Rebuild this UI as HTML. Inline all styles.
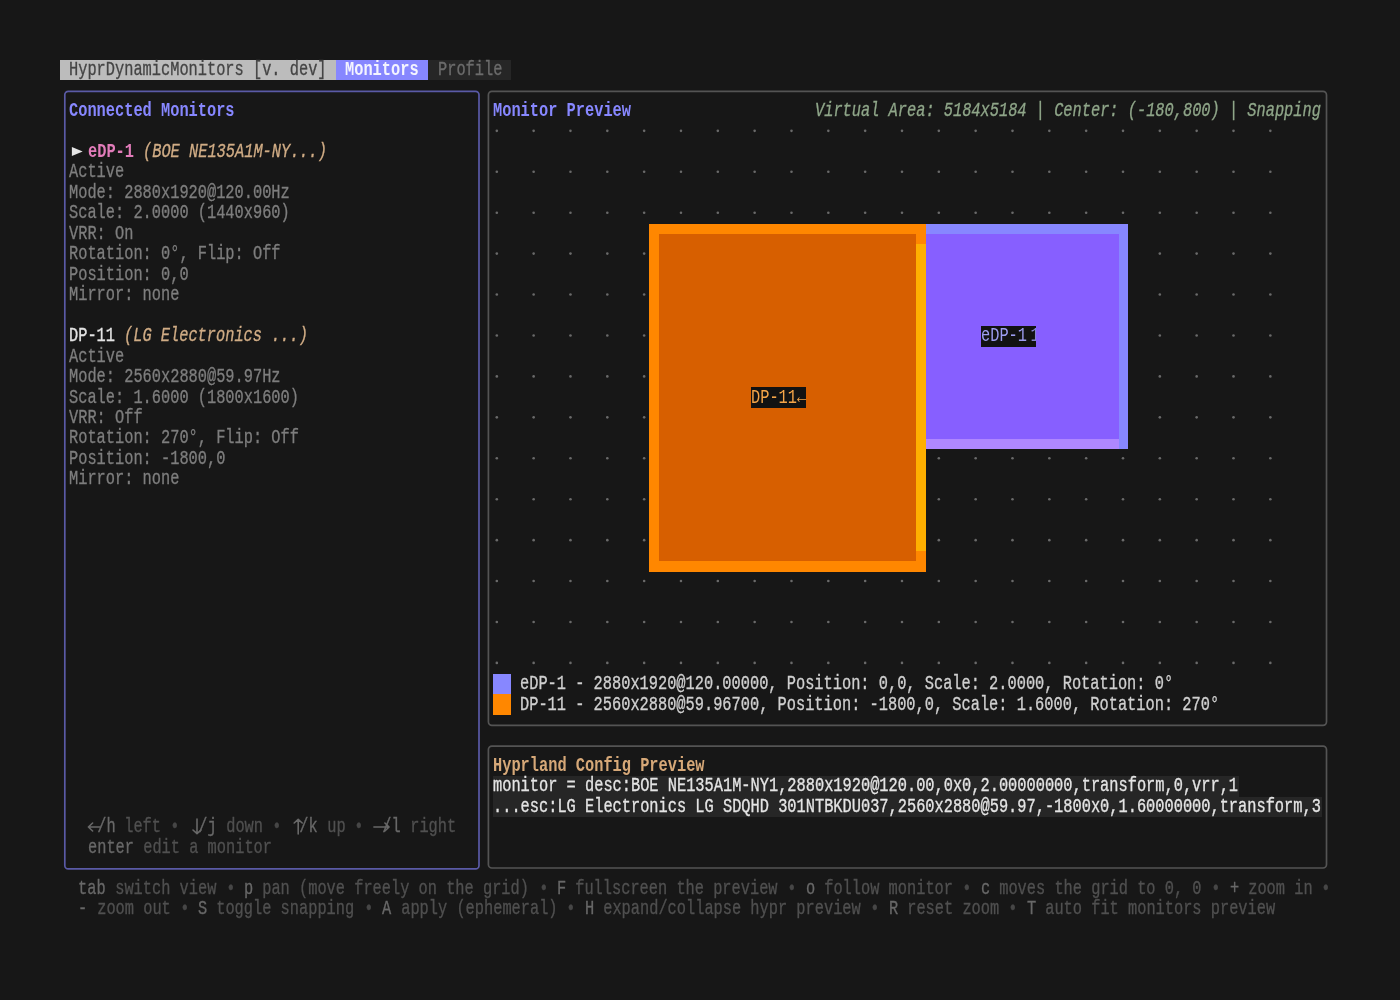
<!DOCTYPE html>
<html><head><meta charset="utf-8"><title>HyprDynamicMonitors</title><style>
html,body{margin:0;padding:0;width:1400px;height:1000px;background:#171717;overflow:hidden}
.b{position:absolute}
.t{position:absolute;-webkit-font-smoothing:antialiased;will-change:transform;-webkit-text-stroke:0.25px currentColor;white-space:pre;font-family:"Liberation Mono",monospace;font-size:15.345px;line-height:20.465px;height:20.465px;transform:scaleY(1.27);transform-origin:0 14.3px}
.bd{font-weight:bold;-webkit-text-stroke:0}
.it{font-style:italic}
.ns{-webkit-text-stroke:0}
</style></head><body>
<div class="b" style="left:60.00px;top:60.00px;width:276.26px;height:20.47px;background:#bcbcbc;"></div>
<div class="b" style="left:336.26px;top:60.00px;width:92.09px;height:20.47px;background:#8787ff;"></div>
<div class="b" style="left:428.35px;top:60.00px;width:82.88px;height:20.47px;background:#262626;"></div>
<svg class="b" style="left:0;top:0" width="1400" height="1000"><rect x="64.8" y="91.3" width="414.20" height="777.60" rx="3.5" fill="none" stroke="#5a5aa6" stroke-width="1.7"/></svg>
<svg class="b" style="left:0;top:0" width="1400" height="1000"><rect x="488.4" y="91.4" width="838.10" height="633.90" rx="3.5" fill="none" stroke="#545454" stroke-width="1.7"/></svg>
<svg class="b" style="left:0;top:0" width="1400" height="1000"><rect x="488.4" y="746.2" width="838.10" height="121.80" rx="3.5" fill="none" stroke="#545454" stroke-width="1.7"/></svg>
<svg class="b" style="left:70px;top:144px" width="16" height="15"><path d="M1.9 2.9L12.7 7.5L1.9 12.1Z" fill="#e4e4e4"/></svg>
<svg class="b" style="left:0;top:0" width="1400" height="1000"><path d="M88.4 827.0H100.1M92.6 823.0L88.4 827.0L92.6 831.0M197.0 819.0V833.5M193.0 830.0L197.0 833.6L201.0 830.0M298.2 834.0V819.5M294.2 823.0L298.2 819.4L302.2 823.0M373.9 827.0H389.1M384.9 823.0L389.1 827.0L384.9 831.0" fill="none" stroke="#686868" stroke-width="1.6" stroke-linecap="round" stroke-linejoin="round"/></svg>
<svg class="b" style="left:0;top:0" width="1400" height="1000" fill="#6a6a6a"><circle cx="496.81" cy="130.83" r="1.3"/><circle cx="533.64" cy="130.83" r="1.3"/><circle cx="570.48" cy="130.83" r="1.3"/><circle cx="607.31" cy="130.83" r="1.3"/><circle cx="644.15" cy="130.83" r="1.3"/><circle cx="680.98" cy="130.83" r="1.3"/><circle cx="717.82" cy="130.83" r="1.3"/><circle cx="754.65" cy="130.83" r="1.3"/><circle cx="791.49" cy="130.83" r="1.3"/><circle cx="828.32" cy="130.83" r="1.3"/><circle cx="865.16" cy="130.83" r="1.3"/><circle cx="901.99" cy="130.83" r="1.3"/><circle cx="938.82" cy="130.83" r="1.3"/><circle cx="975.66" cy="130.83" r="1.3"/><circle cx="1012.49" cy="130.83" r="1.3"/><circle cx="1049.33" cy="130.83" r="1.3"/><circle cx="1086.16" cy="130.83" r="1.3"/><circle cx="1123.00" cy="130.83" r="1.3"/><circle cx="1159.83" cy="130.83" r="1.3"/><circle cx="1196.67" cy="130.83" r="1.3"/><circle cx="1233.50" cy="130.83" r="1.3"/><circle cx="1270.34" cy="130.83" r="1.3"/><circle cx="496.81" cy="171.76" r="1.3"/><circle cx="533.64" cy="171.76" r="1.3"/><circle cx="570.48" cy="171.76" r="1.3"/><circle cx="607.31" cy="171.76" r="1.3"/><circle cx="644.15" cy="171.76" r="1.3"/><circle cx="680.98" cy="171.76" r="1.3"/><circle cx="717.82" cy="171.76" r="1.3"/><circle cx="754.65" cy="171.76" r="1.3"/><circle cx="791.49" cy="171.76" r="1.3"/><circle cx="828.32" cy="171.76" r="1.3"/><circle cx="865.16" cy="171.76" r="1.3"/><circle cx="901.99" cy="171.76" r="1.3"/><circle cx="938.82" cy="171.76" r="1.3"/><circle cx="975.66" cy="171.76" r="1.3"/><circle cx="1012.49" cy="171.76" r="1.3"/><circle cx="1049.33" cy="171.76" r="1.3"/><circle cx="1086.16" cy="171.76" r="1.3"/><circle cx="1123.00" cy="171.76" r="1.3"/><circle cx="1159.83" cy="171.76" r="1.3"/><circle cx="1196.67" cy="171.76" r="1.3"/><circle cx="1233.50" cy="171.76" r="1.3"/><circle cx="1270.34" cy="171.76" r="1.3"/><circle cx="496.81" cy="212.69" r="1.3"/><circle cx="533.64" cy="212.69" r="1.3"/><circle cx="570.48" cy="212.69" r="1.3"/><circle cx="607.31" cy="212.69" r="1.3"/><circle cx="644.15" cy="212.69" r="1.3"/><circle cx="680.98" cy="212.69" r="1.3"/><circle cx="717.82" cy="212.69" r="1.3"/><circle cx="754.65" cy="212.69" r="1.3"/><circle cx="791.49" cy="212.69" r="1.3"/><circle cx="828.32" cy="212.69" r="1.3"/><circle cx="865.16" cy="212.69" r="1.3"/><circle cx="901.99" cy="212.69" r="1.3"/><circle cx="938.82" cy="212.69" r="1.3"/><circle cx="975.66" cy="212.69" r="1.3"/><circle cx="1012.49" cy="212.69" r="1.3"/><circle cx="1049.33" cy="212.69" r="1.3"/><circle cx="1086.16" cy="212.69" r="1.3"/><circle cx="1123.00" cy="212.69" r="1.3"/><circle cx="1159.83" cy="212.69" r="1.3"/><circle cx="1196.67" cy="212.69" r="1.3"/><circle cx="1233.50" cy="212.69" r="1.3"/><circle cx="1270.34" cy="212.69" r="1.3"/><circle cx="496.81" cy="253.62" r="1.3"/><circle cx="533.64" cy="253.62" r="1.3"/><circle cx="570.48" cy="253.62" r="1.3"/><circle cx="607.31" cy="253.62" r="1.3"/><circle cx="644.15" cy="253.62" r="1.3"/><circle cx="680.98" cy="253.62" r="1.3"/><circle cx="717.82" cy="253.62" r="1.3"/><circle cx="754.65" cy="253.62" r="1.3"/><circle cx="791.49" cy="253.62" r="1.3"/><circle cx="828.32" cy="253.62" r="1.3"/><circle cx="865.16" cy="253.62" r="1.3"/><circle cx="901.99" cy="253.62" r="1.3"/><circle cx="938.82" cy="253.62" r="1.3"/><circle cx="975.66" cy="253.62" r="1.3"/><circle cx="1012.49" cy="253.62" r="1.3"/><circle cx="1049.33" cy="253.62" r="1.3"/><circle cx="1086.16" cy="253.62" r="1.3"/><circle cx="1123.00" cy="253.62" r="1.3"/><circle cx="1159.83" cy="253.62" r="1.3"/><circle cx="1196.67" cy="253.62" r="1.3"/><circle cx="1233.50" cy="253.62" r="1.3"/><circle cx="1270.34" cy="253.62" r="1.3"/><circle cx="496.81" cy="294.55" r="1.3"/><circle cx="533.64" cy="294.55" r="1.3"/><circle cx="570.48" cy="294.55" r="1.3"/><circle cx="607.31" cy="294.55" r="1.3"/><circle cx="644.15" cy="294.55" r="1.3"/><circle cx="680.98" cy="294.55" r="1.3"/><circle cx="717.82" cy="294.55" r="1.3"/><circle cx="754.65" cy="294.55" r="1.3"/><circle cx="791.49" cy="294.55" r="1.3"/><circle cx="828.32" cy="294.55" r="1.3"/><circle cx="865.16" cy="294.55" r="1.3"/><circle cx="901.99" cy="294.55" r="1.3"/><circle cx="938.82" cy="294.55" r="1.3"/><circle cx="975.66" cy="294.55" r="1.3"/><circle cx="1012.49" cy="294.55" r="1.3"/><circle cx="1049.33" cy="294.55" r="1.3"/><circle cx="1086.16" cy="294.55" r="1.3"/><circle cx="1123.00" cy="294.55" r="1.3"/><circle cx="1159.83" cy="294.55" r="1.3"/><circle cx="1196.67" cy="294.55" r="1.3"/><circle cx="1233.50" cy="294.55" r="1.3"/><circle cx="1270.34" cy="294.55" r="1.3"/><circle cx="496.81" cy="335.48" r="1.3"/><circle cx="533.64" cy="335.48" r="1.3"/><circle cx="570.48" cy="335.48" r="1.3"/><circle cx="607.31" cy="335.48" r="1.3"/><circle cx="644.15" cy="335.48" r="1.3"/><circle cx="680.98" cy="335.48" r="1.3"/><circle cx="717.82" cy="335.48" r="1.3"/><circle cx="754.65" cy="335.48" r="1.3"/><circle cx="791.49" cy="335.48" r="1.3"/><circle cx="828.32" cy="335.48" r="1.3"/><circle cx="865.16" cy="335.48" r="1.3"/><circle cx="901.99" cy="335.48" r="1.3"/><circle cx="938.82" cy="335.48" r="1.3"/><circle cx="975.66" cy="335.48" r="1.3"/><circle cx="1012.49" cy="335.48" r="1.3"/><circle cx="1049.33" cy="335.48" r="1.3"/><circle cx="1086.16" cy="335.48" r="1.3"/><circle cx="1123.00" cy="335.48" r="1.3"/><circle cx="1159.83" cy="335.48" r="1.3"/><circle cx="1196.67" cy="335.48" r="1.3"/><circle cx="1233.50" cy="335.48" r="1.3"/><circle cx="1270.34" cy="335.48" r="1.3"/><circle cx="496.81" cy="376.41" r="1.3"/><circle cx="533.64" cy="376.41" r="1.3"/><circle cx="570.48" cy="376.41" r="1.3"/><circle cx="607.31" cy="376.41" r="1.3"/><circle cx="644.15" cy="376.41" r="1.3"/><circle cx="680.98" cy="376.41" r="1.3"/><circle cx="717.82" cy="376.41" r="1.3"/><circle cx="754.65" cy="376.41" r="1.3"/><circle cx="791.49" cy="376.41" r="1.3"/><circle cx="828.32" cy="376.41" r="1.3"/><circle cx="865.16" cy="376.41" r="1.3"/><circle cx="901.99" cy="376.41" r="1.3"/><circle cx="938.82" cy="376.41" r="1.3"/><circle cx="975.66" cy="376.41" r="1.3"/><circle cx="1012.49" cy="376.41" r="1.3"/><circle cx="1049.33" cy="376.41" r="1.3"/><circle cx="1086.16" cy="376.41" r="1.3"/><circle cx="1123.00" cy="376.41" r="1.3"/><circle cx="1159.83" cy="376.41" r="1.3"/><circle cx="1196.67" cy="376.41" r="1.3"/><circle cx="1233.50" cy="376.41" r="1.3"/><circle cx="1270.34" cy="376.41" r="1.3"/><circle cx="496.81" cy="417.34" r="1.3"/><circle cx="533.64" cy="417.34" r="1.3"/><circle cx="570.48" cy="417.34" r="1.3"/><circle cx="607.31" cy="417.34" r="1.3"/><circle cx="644.15" cy="417.34" r="1.3"/><circle cx="680.98" cy="417.34" r="1.3"/><circle cx="717.82" cy="417.34" r="1.3"/><circle cx="754.65" cy="417.34" r="1.3"/><circle cx="791.49" cy="417.34" r="1.3"/><circle cx="828.32" cy="417.34" r="1.3"/><circle cx="865.16" cy="417.34" r="1.3"/><circle cx="901.99" cy="417.34" r="1.3"/><circle cx="938.82" cy="417.34" r="1.3"/><circle cx="975.66" cy="417.34" r="1.3"/><circle cx="1012.49" cy="417.34" r="1.3"/><circle cx="1049.33" cy="417.34" r="1.3"/><circle cx="1086.16" cy="417.34" r="1.3"/><circle cx="1123.00" cy="417.34" r="1.3"/><circle cx="1159.83" cy="417.34" r="1.3"/><circle cx="1196.67" cy="417.34" r="1.3"/><circle cx="1233.50" cy="417.34" r="1.3"/><circle cx="1270.34" cy="417.34" r="1.3"/><circle cx="496.81" cy="458.27" r="1.3"/><circle cx="533.64" cy="458.27" r="1.3"/><circle cx="570.48" cy="458.27" r="1.3"/><circle cx="607.31" cy="458.27" r="1.3"/><circle cx="644.15" cy="458.27" r="1.3"/><circle cx="680.98" cy="458.27" r="1.3"/><circle cx="717.82" cy="458.27" r="1.3"/><circle cx="754.65" cy="458.27" r="1.3"/><circle cx="791.49" cy="458.27" r="1.3"/><circle cx="828.32" cy="458.27" r="1.3"/><circle cx="865.16" cy="458.27" r="1.3"/><circle cx="901.99" cy="458.27" r="1.3"/><circle cx="938.82" cy="458.27" r="1.3"/><circle cx="975.66" cy="458.27" r="1.3"/><circle cx="1012.49" cy="458.27" r="1.3"/><circle cx="1049.33" cy="458.27" r="1.3"/><circle cx="1086.16" cy="458.27" r="1.3"/><circle cx="1123.00" cy="458.27" r="1.3"/><circle cx="1159.83" cy="458.27" r="1.3"/><circle cx="1196.67" cy="458.27" r="1.3"/><circle cx="1233.50" cy="458.27" r="1.3"/><circle cx="1270.34" cy="458.27" r="1.3"/><circle cx="496.81" cy="499.20" r="1.3"/><circle cx="533.64" cy="499.20" r="1.3"/><circle cx="570.48" cy="499.20" r="1.3"/><circle cx="607.31" cy="499.20" r="1.3"/><circle cx="644.15" cy="499.20" r="1.3"/><circle cx="680.98" cy="499.20" r="1.3"/><circle cx="717.82" cy="499.20" r="1.3"/><circle cx="754.65" cy="499.20" r="1.3"/><circle cx="791.49" cy="499.20" r="1.3"/><circle cx="828.32" cy="499.20" r="1.3"/><circle cx="865.16" cy="499.20" r="1.3"/><circle cx="901.99" cy="499.20" r="1.3"/><circle cx="938.82" cy="499.20" r="1.3"/><circle cx="975.66" cy="499.20" r="1.3"/><circle cx="1012.49" cy="499.20" r="1.3"/><circle cx="1049.33" cy="499.20" r="1.3"/><circle cx="1086.16" cy="499.20" r="1.3"/><circle cx="1123.00" cy="499.20" r="1.3"/><circle cx="1159.83" cy="499.20" r="1.3"/><circle cx="1196.67" cy="499.20" r="1.3"/><circle cx="1233.50" cy="499.20" r="1.3"/><circle cx="1270.34" cy="499.20" r="1.3"/><circle cx="496.81" cy="540.13" r="1.3"/><circle cx="533.64" cy="540.13" r="1.3"/><circle cx="570.48" cy="540.13" r="1.3"/><circle cx="607.31" cy="540.13" r="1.3"/><circle cx="644.15" cy="540.13" r="1.3"/><circle cx="680.98" cy="540.13" r="1.3"/><circle cx="717.82" cy="540.13" r="1.3"/><circle cx="754.65" cy="540.13" r="1.3"/><circle cx="791.49" cy="540.13" r="1.3"/><circle cx="828.32" cy="540.13" r="1.3"/><circle cx="865.16" cy="540.13" r="1.3"/><circle cx="901.99" cy="540.13" r="1.3"/><circle cx="938.82" cy="540.13" r="1.3"/><circle cx="975.66" cy="540.13" r="1.3"/><circle cx="1012.49" cy="540.13" r="1.3"/><circle cx="1049.33" cy="540.13" r="1.3"/><circle cx="1086.16" cy="540.13" r="1.3"/><circle cx="1123.00" cy="540.13" r="1.3"/><circle cx="1159.83" cy="540.13" r="1.3"/><circle cx="1196.67" cy="540.13" r="1.3"/><circle cx="1233.50" cy="540.13" r="1.3"/><circle cx="1270.34" cy="540.13" r="1.3"/><circle cx="496.81" cy="581.06" r="1.3"/><circle cx="533.64" cy="581.06" r="1.3"/><circle cx="570.48" cy="581.06" r="1.3"/><circle cx="607.31" cy="581.06" r="1.3"/><circle cx="644.15" cy="581.06" r="1.3"/><circle cx="680.98" cy="581.06" r="1.3"/><circle cx="717.82" cy="581.06" r="1.3"/><circle cx="754.65" cy="581.06" r="1.3"/><circle cx="791.49" cy="581.06" r="1.3"/><circle cx="828.32" cy="581.06" r="1.3"/><circle cx="865.16" cy="581.06" r="1.3"/><circle cx="901.99" cy="581.06" r="1.3"/><circle cx="938.82" cy="581.06" r="1.3"/><circle cx="975.66" cy="581.06" r="1.3"/><circle cx="1012.49" cy="581.06" r="1.3"/><circle cx="1049.33" cy="581.06" r="1.3"/><circle cx="1086.16" cy="581.06" r="1.3"/><circle cx="1123.00" cy="581.06" r="1.3"/><circle cx="1159.83" cy="581.06" r="1.3"/><circle cx="1196.67" cy="581.06" r="1.3"/><circle cx="1233.50" cy="581.06" r="1.3"/><circle cx="1270.34" cy="581.06" r="1.3"/><circle cx="496.81" cy="621.99" r="1.3"/><circle cx="533.64" cy="621.99" r="1.3"/><circle cx="570.48" cy="621.99" r="1.3"/><circle cx="607.31" cy="621.99" r="1.3"/><circle cx="644.15" cy="621.99" r="1.3"/><circle cx="680.98" cy="621.99" r="1.3"/><circle cx="717.82" cy="621.99" r="1.3"/><circle cx="754.65" cy="621.99" r="1.3"/><circle cx="791.49" cy="621.99" r="1.3"/><circle cx="828.32" cy="621.99" r="1.3"/><circle cx="865.16" cy="621.99" r="1.3"/><circle cx="901.99" cy="621.99" r="1.3"/><circle cx="938.82" cy="621.99" r="1.3"/><circle cx="975.66" cy="621.99" r="1.3"/><circle cx="1012.49" cy="621.99" r="1.3"/><circle cx="1049.33" cy="621.99" r="1.3"/><circle cx="1086.16" cy="621.99" r="1.3"/><circle cx="1123.00" cy="621.99" r="1.3"/><circle cx="1159.83" cy="621.99" r="1.3"/><circle cx="1196.67" cy="621.99" r="1.3"/><circle cx="1233.50" cy="621.99" r="1.3"/><circle cx="1270.34" cy="621.99" r="1.3"/><circle cx="496.81" cy="662.92" r="1.3"/><circle cx="533.64" cy="662.92" r="1.3"/><circle cx="570.48" cy="662.92" r="1.3"/><circle cx="607.31" cy="662.92" r="1.3"/><circle cx="644.15" cy="662.92" r="1.3"/><circle cx="680.98" cy="662.92" r="1.3"/><circle cx="717.82" cy="662.92" r="1.3"/><circle cx="754.65" cy="662.92" r="1.3"/><circle cx="791.49" cy="662.92" r="1.3"/><circle cx="828.32" cy="662.92" r="1.3"/><circle cx="865.16" cy="662.92" r="1.3"/><circle cx="901.99" cy="662.92" r="1.3"/><circle cx="938.82" cy="662.92" r="1.3"/><circle cx="975.66" cy="662.92" r="1.3"/><circle cx="1012.49" cy="662.92" r="1.3"/><circle cx="1049.33" cy="662.92" r="1.3"/><circle cx="1086.16" cy="662.92" r="1.3"/><circle cx="1123.00" cy="662.92" r="1.3"/><circle cx="1159.83" cy="662.92" r="1.3"/><circle cx="1196.67" cy="662.92" r="1.3"/><circle cx="1233.50" cy="662.92" r="1.3"/><circle cx="1270.34" cy="662.92" r="1.3"/></svg>
<div class="b" style="left:649.35px;top:223.72px;width:276.26px;height:347.91px;background:#d75f00;"></div>
<div class="b" style="left:649.35px;top:223.72px;width:276.26px;height:10.23px;background:#ff8700;"></div>
<div class="b" style="left:649.35px;top:561.40px;width:276.26px;height:10.23px;background:#ff8700;"></div>
<div class="b" style="left:649.35px;top:223.72px;width:9.21px;height:347.91px;background:#ff8700;"></div>
<div class="b" style="left:916.40px;top:223.72px;width:9.21px;height:20.47px;background:#ff8700;"></div>
<div class="b" style="left:916.40px;top:244.19px;width:9.21px;height:306.98px;background:#ffaf00;"></div>
<div class="b" style="left:916.40px;top:551.16px;width:9.21px;height:20.47px;background:#ff8700;"></div>
<div class="b" style="left:925.61px;top:223.72px;width:202.59px;height:225.12px;background:#875fff;"></div>
<div class="b" style="left:925.61px;top:223.72px;width:202.59px;height:10.23px;background:#8787ff;"></div>
<div class="b" style="left:925.61px;top:438.60px;width:193.38px;height:10.23px;background:#af87ff;"></div>
<div class="b" style="left:1118.99px;top:223.72px;width:9.21px;height:225.12px;background:#8787ff;"></div>
<div class="b" style="left:980.86px;top:326.05px;width:55.25px;height:20.47px;background:#121212;"></div>
<div class="b" style="left:750.65px;top:387.44px;width:55.25px;height:20.47px;background:#121212;"></div>
<div class="b" style="left:492.81px;top:673.95px;width:18.42px;height:20.47px;background:#8787ff;"></div>
<div class="b" style="left:492.81px;top:694.42px;width:18.42px;height:20.47px;background:#ff8700;"></div>
<div class="b" style="left:492.81px;top:776.28px;width:745.90px;height:20.47px;background:#262626;"></div>
<div class="b" style="left:492.81px;top:796.74px;width:828.78px;height:20.47px;background:#262626;"></div>
<div class="t" style="left:69.21px;top:61.10px;color:#444444;">HyprDynamicMonitors [v. dev]</div>
<div class="t bd" style="left:345.47px;top:61.10px;color:#f4f4ff;">Monitors</div>
<div class="t" style="left:437.55px;top:61.10px;color:#6c6c6c;">Profile</div>
<div class="t bd" style="left:69.21px;top:102.03px;color:#8787ff;">Connected Monitors</div>
<div class="t bd" style="left:87.63px;top:142.96px;color:#e27cba;">eDP-1</div>
<div class="t it" style="left:142.88px;top:142.96px;color:#d0ac85;">(BOE NE135A1M-NY...)</div>
<div class="t" style="left:69.21px;top:163.43px;color:#7e7e7e;">Active</div>
<div class="t" style="left:69.21px;top:183.89px;color:#7e7e7e;">Mode: 2880x1920@120.00Hz</div>
<div class="t" style="left:69.21px;top:204.36px;color:#7e7e7e;">Scale: 2.0000 (1440x960)</div>
<div class="t" style="left:69.21px;top:224.82px;color:#7e7e7e;">VRR: On</div>
<div class="t" style="left:69.21px;top:245.29px;color:#7e7e7e;">Rotation: 0°, Flip: Off</div>
<div class="t" style="left:69.21px;top:265.75px;color:#7e7e7e;">Position: 0,0</div>
<div class="t" style="left:69.21px;top:286.22px;color:#7e7e7e;">Mirror: none</div>
<div class="t" style="left:69.21px;top:327.15px;color:#e4e4e4;">DP-11</div>
<div class="t it" style="left:124.46px;top:327.15px;color:#d0ac85;">(LG Electronics ...)</div>
<div class="t" style="left:69.21px;top:347.61px;color:#7e7e7e;">Active</div>
<div class="t" style="left:69.21px;top:368.08px;color:#7e7e7e;">Mode: 2560x2880@59.97Hz</div>
<div class="t" style="left:69.21px;top:388.54px;color:#7e7e7e;">Scale: 1.6000 (1800x1600)</div>
<div class="t" style="left:69.21px;top:409.01px;color:#7e7e7e;">VRR: Off</div>
<div class="t" style="left:69.21px;top:429.47px;color:#7e7e7e;">Rotation: 270°, Flip: Off</div>
<div class="t" style="left:69.21px;top:449.94px;color:#7e7e7e;">Position: -1800,0</div>
<div class="t" style="left:69.21px;top:470.40px;color:#7e7e7e;">Mirror: none</div>
<div class="t" style="left:87.63px;top:818.31px;color:#686868;"> /h</div>
<div class="t" style="left:115.25px;top:818.31px;color:#505050;"> left</div>
<div class="t" style="left:161.29px;top:818.31px;color:#464646;"> • </div>
<div class="t" style="left:188.92px;top:818.31px;color:#686868;"> /j</div>
<div class="t" style="left:216.55px;top:818.31px;color:#505050;"> down</div>
<div class="t" style="left:262.59px;top:818.31px;color:#464646;"> • </div>
<div class="t" style="left:290.22px;top:818.31px;color:#686868;"> /k</div>
<div class="t" style="left:317.84px;top:818.31px;color:#505050;"> up</div>
<div class="t" style="left:345.47px;top:818.31px;color:#464646;"> • </div>
<div class="t" style="left:373.09px;top:818.31px;color:#686868;"> /l</div>
<div class="t" style="left:400.72px;top:818.31px;color:#505050;"> right</div>
<div class="t" style="left:87.63px;top:838.77px;color:#686868;">enter</div>
<div class="t" style="left:133.67px;top:838.77px;color:#505050;"> edit a monitor</div>
<div class="t bd" style="left:492.81px;top:102.03px;color:#8787ff;">Monitor Preview</div>
<div class="t it" style="left:815.11px;top:102.03px;color:#8fa689;">Virtual Area: 5184x5184 | Center: (-180,800) | Snapping</div>
<div class="t ns" style="left:980.86px;top:327.15px;color:#9d9df0;">eDP-1</div>
<div class="t ns" style="left:1026.91px;top:327.15px;color:#8585d0;width:9.2px;overflow:hidden;text-indent:3.5px">1</div>
<div class="t ns" style="left:750.65px;top:388.54px;color:#f5a548;">DP-11←</div>
<div class="t" style="left:520.43px;top:675.05px;color:#d0d0d0;">eDP-1 - 2880x1920@120.00000, Position: 0,0, Scale: 2.0000, Rotation: 0°</div>
<div class="t" style="left:520.43px;top:695.52px;color:#d0d0d0;">DP-11 - 2560x2880@59.96700, Position: -1800,0, Scale: 1.6000, Rotation: 270°</div>
<div class="t bd" style="left:492.81px;top:756.91px;color:#d6a878;">Hyprland Config Preview</div>
<div class="t" style="left:492.81px;top:777.38px;color:#e4e4e4;">monitor = desc:BOE NE135A1M-NY1,2880x1920@120.00,0x0,2.00000000,transform,0,vrr,1</div>
<div class="t" style="left:492.81px;top:797.84px;color:#e4e4e4;">...esc:LG Electronics LG SDQHD 301NTBKDU037,2560x2880@59.97,-1800x0,1.60000000,transform,3</div>
<div class="t" style="left:78.42px;top:879.70px;color:#686868;">tab</div>
<div class="t" style="left:106.04px;top:879.70px;color:#505050;"> switch view</div>
<div class="t" style="left:216.55px;top:879.70px;color:#464646;"> • </div>
<div class="t" style="left:244.17px;top:879.70px;color:#686868;">p</div>
<div class="t" style="left:253.38px;top:879.70px;color:#505050;"> pan (move freely on the grid)</div>
<div class="t" style="left:529.64px;top:879.70px;color:#464646;"> • </div>
<div class="t" style="left:557.27px;top:879.70px;color:#686868;">F</div>
<div class="t" style="left:566.47px;top:879.70px;color:#505050;"> fullscreen the preview</div>
<div class="t" style="left:778.27px;top:879.70px;color:#464646;"> • </div>
<div class="t" style="left:805.90px;top:879.70px;color:#686868;">o</div>
<div class="t" style="left:815.11px;top:879.70px;color:#505050;"> follow monitor</div>
<div class="t" style="left:953.24px;top:879.70px;color:#464646;"> • </div>
<div class="t" style="left:980.86px;top:879.70px;color:#686868;">c</div>
<div class="t" style="left:990.07px;top:879.70px;color:#505050;"> moves the grid to 0, 0</div>
<div class="t" style="left:1201.87px;top:879.70px;color:#464646;"> • </div>
<div class="t" style="left:1229.50px;top:879.70px;color:#686868;">+</div>
<div class="t" style="left:1238.71px;top:879.70px;color:#505050;"> zoom in</div>
<div class="t" style="left:1312.37px;top:879.70px;color:#464646;"> •</div>
<div class="t" style="left:78.42px;top:900.17px;color:#686868;">-</div>
<div class="t" style="left:87.63px;top:900.17px;color:#505050;"> zoom out</div>
<div class="t" style="left:170.50px;top:900.17px;color:#464646;"> • </div>
<div class="t" style="left:198.13px;top:900.17px;color:#686868;">S</div>
<div class="t" style="left:207.34px;top:900.17px;color:#505050;"> toggle snapping</div>
<div class="t" style="left:354.68px;top:900.17px;color:#464646;"> • </div>
<div class="t" style="left:382.30px;top:900.17px;color:#686868;">A</div>
<div class="t" style="left:391.51px;top:900.17px;color:#505050;"> apply (ephemeral)</div>
<div class="t" style="left:557.27px;top:900.17px;color:#464646;"> • </div>
<div class="t" style="left:584.89px;top:900.17px;color:#686868;">H</div>
<div class="t" style="left:594.10px;top:900.17px;color:#505050;"> expand/collapse hypr preview</div>
<div class="t" style="left:861.15px;top:900.17px;color:#464646;"> • </div>
<div class="t" style="left:888.78px;top:900.17px;color:#686868;">R</div>
<div class="t" style="left:897.99px;top:900.17px;color:#505050;"> reset zoom</div>
<div class="t" style="left:999.28px;top:900.17px;color:#464646;"> • </div>
<div class="t" style="left:1026.91px;top:900.17px;color:#686868;">T</div>
<div class="t" style="left:1036.12px;top:900.17px;color:#505050;"> auto fit monitors preview</div>
</body></html>
